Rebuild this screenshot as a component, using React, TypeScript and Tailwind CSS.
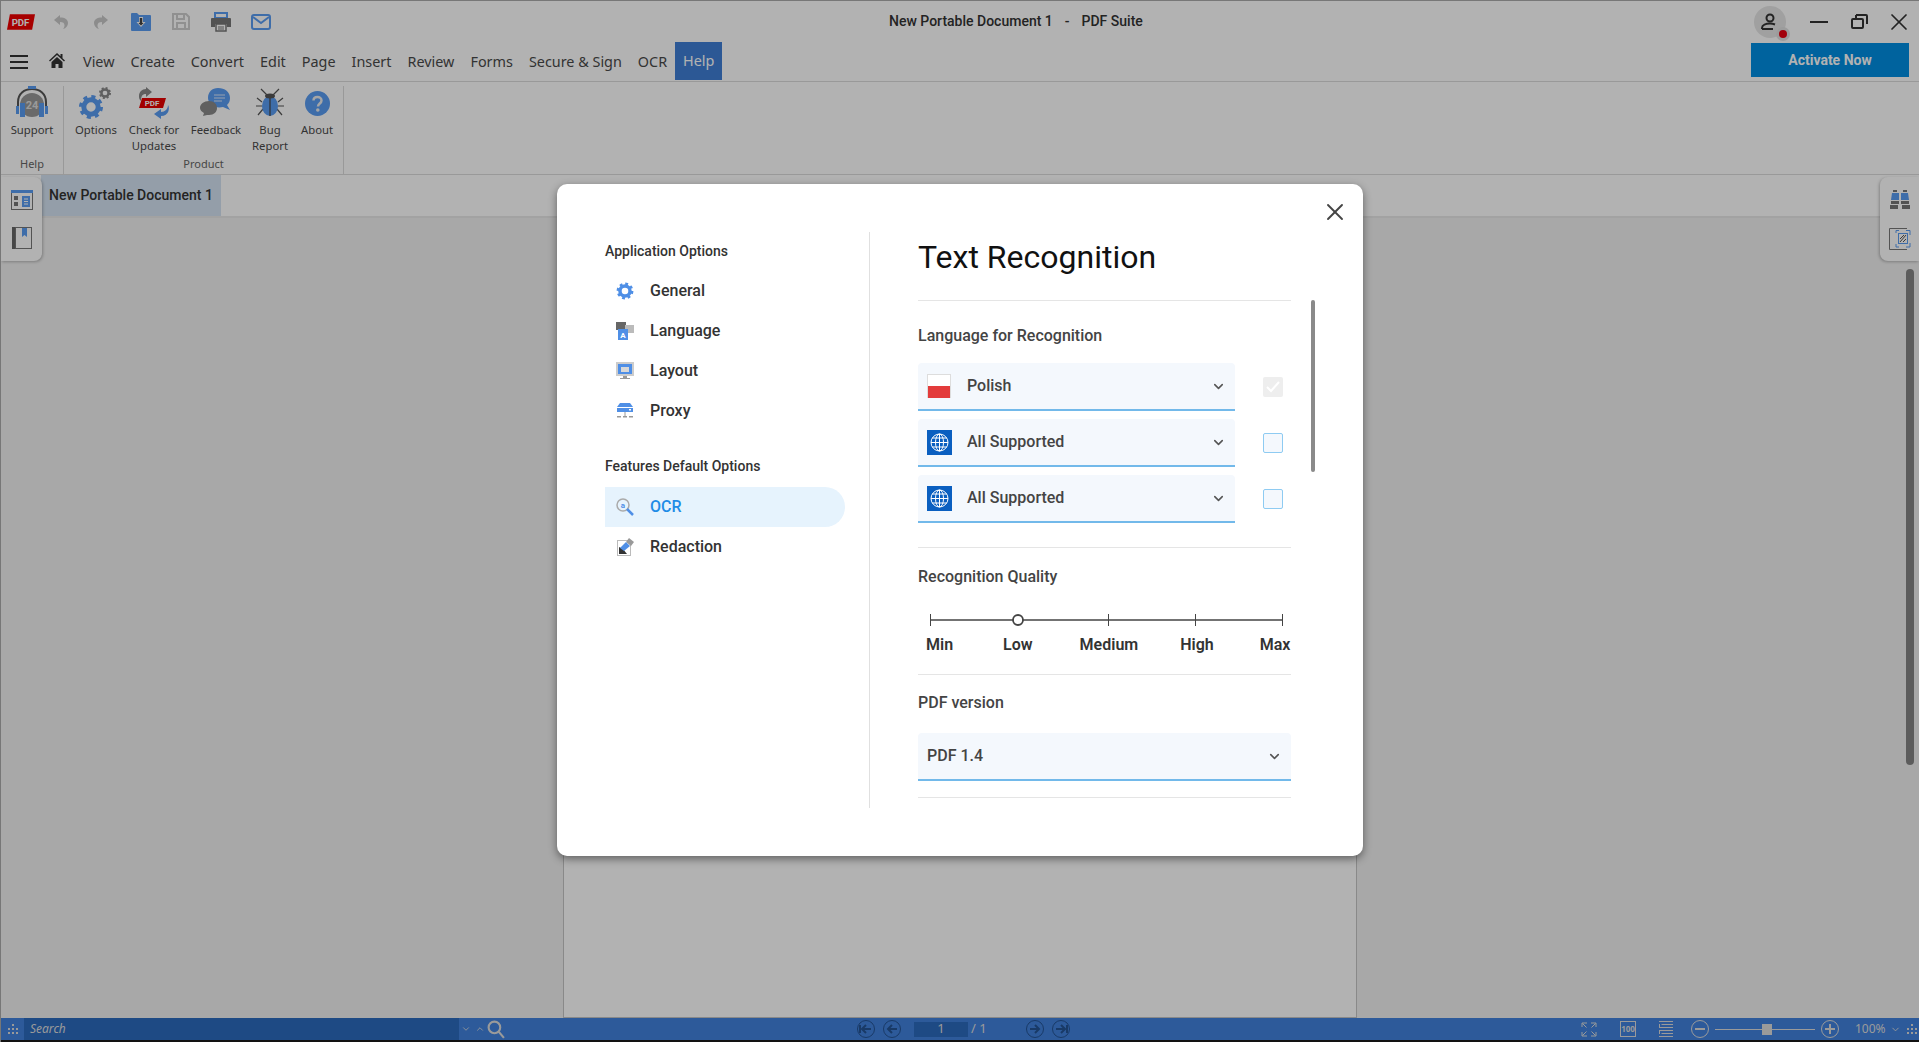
import { ChevronDown, X } from "lucide-react";

const BLUE = "#5a9cf2";

function Gear({ cx, cy, r, color }: { cx: number; cy: number; r: number; color: string }) {
  const teeth = (2 * Math.PI * r) / 16;
  return (
    <g fill="none" stroke={color}>
      <circle cx={cx} cy={cy} r={r} strokeWidth={r * 0.4} strokeDasharray={`${teeth} ${teeth}`} />
      <circle cx={cx} cy={cy} r={r * 0.72} strokeWidth={r * 0.5} />
    </g>
  );
}

function PdfLogo() {
  return (
    <svg width="30" height="18" viewBox="0 0 30 18">
      <path d="M3 1H29L26 17H0Z" fill="#f00000" />
      <text x="14" y="13" fontSize="10" fontWeight="700" fontFamily="Roboto" fill="#fff" textAnchor="middle">PDF</text>
    </svg>
  );
}

function UndoIcon({ flip }: { flip?: boolean }) {
  return (
    <svg width="16" height="16" viewBox="0 0 16 16" className={flip ? "-scale-x-100" : ""}>
      <path d="M7 1L1 6l6 5V8c3 0 4.500 1 4.500 3.500 0 1.500-.7 2.500-1.500 3.500 3-.8 5-3 5-6 0-3.500-3-5.500-8-5.500Z" fill="#c9c9c9" />
    </svg>
  );
}

function FolderIcon() {
  return (
    <svg width="20" height="19" viewBox="0 0 20 19">
      <path d="M0 2q0-1 1-1h5l2 2h11q1 0 1 1v14q0 1-1 1H1q-1 0-1-1Z" fill={BLUE} />
      <path d="M8 5h4v5h2.500L10 15 5.500 10H8Z" fill="#fff" />
      <path d="M8.800 6h2.400v5h1.400L10 13.500 7.400 11h1.400Z" fill="#444" />
    </svg>
  );
}

function SaveIcon() {
  return (
    <svg width="18" height="17" viewBox="0 0 18 17" fill="none" stroke="#cfcfcf" strokeWidth="2">
      <path d="M1 1h13l3 3v12H1Z" />
      <path d="M5 1v5h7V1M5 16v-6h8v6" />
    </svg>
  );
}

function PrintIcon() {
  return (
    <svg width="22" height="20" viewBox="0 0 22 20">
      <path d="M5 1h12v5H5Z" fill="#fff" stroke={BLUE} strokeWidth="2" />
      <path d="M1 7q0-1 1-1h18q1 0 1 1v8h-4v-3H5v3H1Z" fill="#777" />
      <path d="M6 12h10v7H6Z" fill="#fff" stroke="#777" strokeWidth="1.500" />
      <path d="M8 15h6M8 17h6" stroke="#777" />
    </svg>
  );
}

function MailIcon() {
  return (
    <svg width="20" height="16" viewBox="0 0 20 16" fill="none" stroke={BLUE} strokeWidth="2">
      <rect x="1" y="1" width="18" height="14" rx="2" />
      <path d="M2 3l8 6 8-6" />
    </svg>
  );
}

function HomeIcon() {
  return (
    <svg width="16" height="15" viewBox="0 0 16 15" fill="#333">
      <path d="M8 0L0 7.500l1 1L8 2l7 6.500 1-1-2.500-2.300V1H11.500v2.300Z" />
      <path d="M2.500 9L8 4l5.500 5v6H9.500v-4h-3v4h-4Z" />
    </svg>
  );
}

function SupportIcon() {
  return (
    <svg width="34" height="34" viewBox="0 0 34 34">
      <circle cx="17" cy="19" r="12" fill="#999" />
      <path d="M3 22V16C3 8 9 3 17 3s14 5 14 13v6" fill="none" stroke="#555" strokeWidth="2" />
      <rect x="13" y="0" width="8" height="3" fill={BLUE} />
      <rect x="5" y="17" width="5" height="14" fill={BLUE} />
      <rect x="24" y="17" width="5" height="14" fill={BLUE} />
      <rect x="1" y="20" width="3" height="8" fill={BLUE} />
      <rect x="30" y="20" width="3" height="8" fill={BLUE} />
      <text x="17" y="23" fontSize="11" fontWeight="700" fontFamily="Roboto" fill="#ddd" textAnchor="middle">24</text>
    </svg>
  );
}

function OptionsIcon() {
  return (
    <svg width="34" height="34" viewBox="0 0 34 34">
      <Gear cx={12} cy={21} r={10} color={BLUE} />
      <Gear cx={26} cy={7} r={5} color="#8a8a8a" />
    </svg>
  );
}

function UpdatesIcon() {
  return (
    <svg width="32" height="32" viewBox="0 0 32 32">
      <path d="M1 9c0-4 3-7 7-7V0l6 5-6 5V7C5 7 3 8 3 14 1 12 1 11 1 9Z" fill="#888" />
      <path d="M4 11h24l-3 10H1Z" fill="#e80000" />
      <text x="14" y="19" fontSize="8" fontWeight="700" fontFamily="Roboto" fill="#fff" textAnchor="middle">PDF</text>
      <path d="M30 18c2 3 1 11-7 11v3l-7-5 7-5v3c4 0 7-3 7-7Z" fill={BLUE} />
    </svg>
  );
}

function FeedbackIcon() {
  return (
    <svg width="32" height="30" viewBox="0 0 32 30">
      <path d="M18 0c7 0 12 4 12 10 0 3-1 5-3 7l3 5-7-3c-8 2-15-3-15-9C8 4 12 0 18 0Z" fill={BLUE} />
      <path d="M14 7h11M14 10h11M14 13h8" stroke="#dbe8fb" strokeWidth="1" />
      <path d="M9 13c5 0 8 3 8 7s-3 7-8 7l-2 0-4 1 1-3c-2-1-4-3-4-5 0-4 4-7 9-7Z" fill="#8a8a8a" />
    </svg>
  );
}

function BugIcon() {
  return (
    <svg width="28" height="30" viewBox="0 0 28 30" fill="none" stroke="#555" strokeWidth="1.200">
      <path d="M5 1l6 6M23 1l-6 6M1 10l5 4M27 10l-5 4M0 18h6M28 18h-6M2 27l5-6M26 27l-5-6" />
      <ellipse cx="14" cy="18" rx="8" ry="10" fill={BLUE} stroke="none" />
      <path d="M14 8v20" stroke="#444" />
      <ellipse cx="14" cy="8" rx="5" ry="2.500" fill="#555" stroke="none" />
    </svg>
  );
}

function AboutIcon() {
  return (
    <svg width="25" height="25" viewBox="0 0 25 25">
      <circle cx="12.500" cy="12.500" r="12.500" fill={BLUE} />
      <path d="M8.500 9.500c0-2.500 2-3.500 4-3.500s4 1.200 4 3.500c0 3-3.500 3-3.500 6" fill="none" stroke="#eee" strokeWidth="2.500" />
      <circle cx="12.800" cy="19" r="1.800" fill="#eee" />
    </svg>
  );
}

function PanelIcon() {
  return (
    <svg width="22" height="20" viewBox="0 0 22 20">
      <rect x="0.500" y="0.500" width="21" height="19" fill="#fff" stroke="#777" />
      <rect x="0" y="0" width="22" height="3" fill={BLUE} />
      <path d="M3 6h4v4H3ZM3 12h4v4H3Z" fill="#777" />
      <rect x="11" y="6" width="8" height="11" fill={BLUE} />
      <path d="M13 9h4M13 11.500h4M13 14h4" stroke="#fff" />
    </svg>
  );
}

function BookmarkIcon() {
  return (
    <svg width="20" height="22" viewBox="0 0 20 22">
      <rect x="0" y="0" width="3" height="22" fill="#666" />
      <rect x="3.500" y="0.500" width="16" height="21" fill="#fff" stroke="#777" />
      <path d="M10 1h5v9l-2.500-2L10 10Z" fill={BLUE} />
    </svg>
  );
}

function BinocularsIcon() {
  return (
    <svg width="20" height="19" viewBox="0 0 20 19">
      <path d="M3 0h4v2H3ZM13 0h4v2h-4Z" fill="#777" />
      <path d="M2 3h7v7H1ZM11 3h7l1 7h-8Z" fill={BLUE} />
      <rect x="9" y="5" width="2" height="5" fill="#fff" />
      <path d="M1 11h8v3H1ZM11 11h8v3h-8ZM0 15h8v4H0ZM12 15h8v4h-8Z" fill="#777" />
    </svg>
  );
}

function SnapIcon() {
  return (
    <svg width="22" height="22" viewBox="0 0 22 22" fill="none">
      <path d="M18 .5H.5v21H18" stroke="#777" />
      <path d="M7 5V2.500h3M17 2.500h4V7M21 15v4h-4M10 19H7v-3" stroke={BLUE} />
      <rect x="9.500" y="5.500" width="9" height="10" stroke={BLUE} />
      <path d="M11 14l6-7M11 11l4-4M14 14l3-3" stroke="#555" />
    </svg>
  );
}

function Grip() {
  return (
    <svg width="10" height="10" viewBox="0 0 10 10" fill="#ddd">
      <path d="M4 0h2v2H4ZM0 4h2v2H0ZM4 4h2v2H4ZM8 4h2v2H8ZM0 8h2v2H0ZM4 8h2v2H4ZM8 8h2v2H8Z" />
    </svg>
  );
}

function NavIcon({ dir, end }: { dir: "left" | "right"; end?: boolean }) {
  return (
    <svg width="18" height="18" viewBox="0 0 18 18" fill="none" stroke="#245394" className={dir === "right" ? "-scale-x-100" : ""}>
      <circle cx="9" cy="9" r="8.500" />
      <path d="M14 9H5.500M9 5L5 9l4 4" strokeWidth="2" />
      {end && <path d="M3 5v8" strokeWidth="2" />}
    </svg>
  );
}

function FitIcon() {
  return (
    <svg width="16" height="15" viewBox="0 0 16 15" fill="none" stroke="#ddd">
      <path d="M1 5V1h5M10 1h5v4M15 10v4h-5M6 14H1v-4M1.500 1.500l4 4M14.500 1.500l-4 4M14.500 13.500l-4-4M1.500 13.500l4-4" />
    </svg>
  );
}

function PageFlowIcon() {
  return (
    <svg width="14" height="16" viewBox="0 0 14 16" fill="none" stroke="#ddd">
      <path d="M0 .5h14M2.500 3.500H14M0 6.500h14M0 9.500h14M2.500 12.500H14M0 15.500h14" />
      <path d="M.5 3v4M.5 9v4" />
    </svg>
  );
}

function ZoomBtn({ plus }: { plus?: boolean }) {
  return (
    <svg width="18" height="18" viewBox="0 0 18 18" fill="none" stroke="#ddd">
      <circle cx="9" cy="9" r="8.500" />
      <path d="M4 9h10" strokeWidth="2" />
      {plus && <path d="M9 4v10" strokeWidth="2" />}
    </svg>
  );
}

function SearchIcon() {
  return (
    <svg width="18" height="19" viewBox="0 0 17 18" fill="none" stroke="#ddd" strokeWidth="2">
      <circle cx="7" cy="7" r="5.500" />
      <path d="M11 11l5 6" />
    </svg>
  );
}

function Globe() {
  return (
    <div className="flex h-[25px] w-[25px] items-center justify-center bg-[#0a5fc0]">
      <svg width="19" height="19" viewBox="0 0 19 19" fill="none" stroke="#fff" strokeWidth="1">
        <circle cx="9.500" cy="9.500" r="8.500" />
        <ellipse cx="9.500" cy="9.500" rx="4" ry="8.500" />
        <path d="M9.500 1v17M1 9.500h17M2.300 5h14.400M2.300 14h14.400" />
      </svg>
    </div>
  );
}

function Flag() {
  return (
    <div className="flex h-[24px] w-[24px] flex-col border border-b-0 border-[#ddd]">
      <div className="h-[11px] bg-white" />
      <div className="flex-1 bg-[#e33b3b]" />
    </div>
  );
}

function NavGeneral() {
  return (
    <svg width="18" height="18" viewBox="0 0 18 18">
      <Gear cx={9} cy={9} r={7} color="#4f8fe6" />
    </svg>
  );
}

function NavLanguage() {
  return (
    <svg width="18" height="18" viewBox="0 0 18 18">
      <rect x="0" y="0" width="10" height="8" fill="#666" />
      <rect x="9" y="3" width="9" height="8" fill="#bbb" />
      <rect x="2" y="7" width="10" height="11" fill="#4f8fe6" />
      <text x="7" y="16" fontSize="8" fontWeight="700" fontFamily="Roboto" fill="#fff" textAnchor="middle">A</text>
    </svg>
  );
}

function NavLayout() {
  return (
    <svg width="18" height="18" viewBox="0 0 18 18">
      <rect x="0" y="0" width="18" height="14" fill="#ccc" />
      <rect x="2" y="2" width="14" height="10" fill="#4f8fe6" />
      <rect x="5" y="5" width="8" height="5" fill="#d8d8d8" />
      <path d="M7 14h4v2h3v1H4v-1h3Z" fill="#999" />
    </svg>
  );
}

function NavProxy() {
  return (
    <svg width="18" height="16" viewBox="0 0 18 16">
      <path d="M4 0h10l3 4H1ZM1 5h16v4H1Z" fill="#4f8fe6" />
      <rect x="13" y="6" width="2" height="1.500" fill="#fff" />
      <path d="M8.500 9h1v4h-1ZM1 13h4v1.500H1ZM7 13h4v1.500H7ZM13 13h4v1.500h-4Z" fill="#999" />
    </svg>
  );
}

function NavOcr() {
  return (
    <svg width="18" height="18" viewBox="0 0 18 18" fill="none">
      <circle cx="7" cy="7" r="6" stroke="#aaa" strokeWidth="1.500" />
      <text x="7" y="10" fontSize="8" fontWeight="700" fontFamily="Roboto" fill="#4f8fe6" textAnchor="middle">a</text>
      <path d="M11 11l6 6" stroke="#4f8fe6" strokeWidth="2.500" />
    </svg>
  );
}

function NavRedaction() {
  return (
    <svg width="17" height="18" viewBox="0 0 17 18">
      <rect x="0.500" y="2.500" width="13" height="15" fill="#fff" stroke="#bbb" />
      <path d="M2 16V9l4 2 4 5Z" fill="#333" />
      <path d="M12 0l5 4-3 4-5-4Z" fill="#999" />
      <path d="M3 10l6-6 4 4-6 5Z" fill="#4f8fe6" />
    </svg>
  );
}

const menus = ["View", "Create", "Convert", "Edit", "Page", "Insert", "Review", "Forms", "Secure & Sign", "OCR"];

const ribbon = [
  { label: "Options", icon: <OptionsIcon />, w: "w-[52px]" },
  { label: "Check for Updates", icon: <UpdatesIcon />, w: "w-[64px]" },
  { label: "Feedback", icon: <FeedbackIcon />, w: "w-[60px]" },
  { label: "Bug Report", icon: <BugIcon />, w: "w-[48px]" },
  { label: "About", icon: <AboutIcon />, w: "w-[46px]" },
];

function RibbonBtn({ label, icon, w }: { label: string; icon: React.ReactNode; w: string }) {
  return (
    <div className={`flex flex-col items-center ${w}`}>
      <div className="flex h-[34px] items-center justify-center">{icon}</div>
      <div className="mt-[2px] text-center text-[11.300px] leading-[16px] text-[#4a4a4a]">{label}</div>
    </div>
  );
}

function NavRow({ icon, label, active }: { icon: React.ReactNode; label: string; active?: boolean }) {
  return (
    <div className={`flex h-[40px] w-[240px] items-center rounded-r-full ${active ? "bg-[#e6f3fd] text-[#1f8ce6]" : "text-[#333]"}`}>
      <div className="flex w-[45px] justify-center pr-[5px]">{icon}</div>
      <span className="text-[16px] font-medium">{label}</span>
    </div>
  );
}

function LangRow({ icon, label, checked }: { icon: React.ReactNode; label: string; checked?: boolean }) {
  return (
    <div className="flex items-center">
      <div className="flex h-[48px] w-[317px] items-center rounded-t-[4px] border-b-2 border-[#72b9ea] bg-[#f4f8fd] pr-[9px] pl-[9px]">
        <div className="w-[40px]">{icon}</div>
        <span className="flex-1 text-[16px] font-medium text-[#444]">{label}</span>
        <ChevronDown size={15} strokeWidth={2.5} className="text-[#555]" />
      </div>
      {checked ? (
        <div className="ml-[28px] flex h-[20px] w-[20px] items-center justify-center rounded-[2px] bg-[#eeeeee]">
          <svg width="14" height="12" viewBox="0 0 14 12" fill="none" stroke="#fff" strokeWidth="2">
            <path d="M1 6l4 4 8-9" />
          </svg>
        </div>
      ) : (
        <div className="ml-[28px] h-[20px] w-[20px] rounded-[2px] border border-[#8ecbf2] bg-[#f4f8fd]" />
      )}
    </div>
  );
}

export default function App() {
  return (
    <div className="relative flex h-[1042px] w-[1919px] flex-col overflow-hidden border-t border-l border-[#777] bg-white font-['Noto_Sans',sans-serif] text-[#333]">
      {/* title bar */}
      <div className="flex h-[41px] items-center">
        <div className="ml-[6px] flex w-[29px] items-center">
          <PdfLogo />
        </div>
        <div className="ml-[5px] flex items-center">
          <div className="flex w-[40px] justify-center"><UndoIcon /></div>
          <div className="flex w-[40px] justify-center"><UndoIcon flip /></div>
          <div className="flex w-[40px] justify-center"><FolderIcon /></div>
          <div className="flex w-[40px] justify-center"><SaveIcon /></div>
          <div className="flex w-[40px] justify-center"><PrintIcon /></div>
          <div className="flex w-[40px] justify-center"><MailIcon /></div>
        </div>
        <div className="ml-[608px] flex gap-[12px] font-['Roboto',sans-serif] text-[14px] font-medium text-[#333]">
          <span>New Portable Document 1</span>
          <span>-</span>
          <span>PDF Suite</span>
        </div>
        <div className="relative ml-auto flex h-[32px] w-[32px] items-center justify-center rounded-full bg-[#e6e6e6]">
          <svg width="18" height="17" viewBox="0 0 18 17" fill="none" stroke="#333" strokeWidth="2">
            <circle cx="9" cy="5" r="3.500" />
            <path d="M1 16v-1c0-3 4-4.500 8-4.500 2 0 3.500.4 5 1M1 16h11" />
          </svg>
          <div className="absolute right-[-4px] bottom-[-3px] flex h-[14px] w-[14px] items-center justify-center rounded-full bg-[#e0e0e0]">
            <div className="h-[8px] w-[8px] rounded-full bg-[#e8000f]" />
          </div>
        </div>
        <div className="ml-[24px] h-[2px] w-[18px] bg-[#333]" />
        <svg className="ml-[23px]" width="17" height="15" viewBox="0 0 17 15" fill="none" stroke="#333" strokeWidth="2">
          <rect x="1" y="5" width="11" height="9" rx="1" />
          <path d="M5 1h10q1 0 1 1v8" />
          <path d="M5 1v3" />
        </svg>
        <X className="mr-[6px] ml-[17px] text-[#333]" size={28} strokeWidth={1.5} />
      </div>

      {/* menu row */}
      <div className="flex h-[40px] border-b border-[#dcdcdc]">
        <div className="ml-[9px] flex items-center">
          <div className="flex flex-col gap-[4px]">
            <div className="h-[2px] w-[18px] bg-[#333]" />
            <div className="h-[2px] w-[18px] bg-[#333]" />
            <div className="h-[2px] w-[18px] bg-[#333]" />
          </div>
        </div>
        <div className="ml-[21px] flex items-center pb-[3px]">
          <HomeIcon />
        </div>
        <div className="ml-[18px] flex items-center gap-[16px] text-[14.400px] text-[#4a4a4a]">
          {menus.map((m) => (
            <span key={m}>{m}</span>
          ))}
        </div>
        <div className="ml-[8px] flex h-[38px] w-[47px] items-center justify-center self-start bg-[#3f7fd6] text-[14.400px] text-white">
          Help
        </div>
        <div className="mt-px mr-[10px] ml-auto flex h-[34px] w-[158px] items-center justify-center bg-[#008ee3] font-['Roboto',sans-serif] text-[14px] font-bold text-white">
          Activate Now
        </div>
      </div>

      {/* ribbon */}
      <div className="flex h-[93px] border-b border-[#dcdcdc] pt-[4px]">
        <div className="flex w-[63px] flex-col items-center border-r border-[#dcdcdc]">
          <RibbonBtn label="Support" icon={<SupportIcon />} w="w-[50px]" />
          <div className="mt-auto pb-[2px] text-[11px] text-[#666]">Help</div>
        </div>
        <div className="flex w-[280px] flex-col border-r border-[#dcdcdc]">
          <div className="flex pl-[6px]">
            {ribbon.map((r) => (
              <RibbonBtn key={r.label} {...r} />
            ))}
          </div>
          <div className="mt-auto pb-[2px] text-center text-[11px] text-[#666]">Product</div>
        </div>
      </div>

      {/* tab row */}
      <div className="flex h-[43px] border-b-2 border-[#e8e8e8] pl-[40px]">
        <div className="flex h-[41px] w-[180px] items-center justify-center bg-[#d5e3f2] font-['Roboto',sans-serif] text-[14px] font-medium text-[#333]">
          New Portable Document 1
        </div>
      </div>

      {/* doc area */}
      <div className="flex flex-1 justify-center overflow-hidden bg-[#f1f1f1] pt-[16px]">
        <div className="w-[794px] border border-[#c4c4c4] bg-white" />
      </div>
      <div className="absolute top-[268px] right-[5px] h-[496px] w-[8px] rounded-full bg-[#858585]" />

      {/* status bar */}
      <div className="flex h-[22px] items-center bg-[#4182dd] text-[#ddd]">
        <div className="flex w-[23px] justify-center">
          <Grip />
        </div>
        <div className="flex h-full w-[435px] items-center bg-[#2c6abe] pl-[6px] text-[12px] italic">Search</div>
        <ChevronDown className="ml-[2px]" size={10} />
        <ChevronDown className="ml-[4px] rotate-180" size={10} />
        <div className="ml-[2px]">
          <SearchIcon />
        </div>
        <div className="ml-[352px]">
          <NavIcon dir="left" end />
        </div>
        <div className="ml-[8px]">
          <NavIcon dir="left" />
        </div>
        <div className="ml-[13px] flex h-[15px] w-[54px] items-center justify-center bg-[#2c6abe] text-[13px]">1</div>
        <div className="ml-[3px] w-[55px] text-[13px]">/ 1</div>
        <div>
          <NavIcon dir="right" />
        </div>
        <div className="ml-[8px]">
          <NavIcon dir="right" end />
        </div>
        <div className="ml-[511px]">
          <FitIcon />
        </div>
        <div className="ml-[23px] flex h-[16px] w-[16px] items-center justify-center border border-[#ddd] text-[8px] font-bold">100</div>
        <div className="ml-[23px]">
          <PageFlowIcon />
        </div>
        <div className="ml-[18px]">
          <ZoomBtn />
        </div>
        <div className="relative ml-[6px] flex h-[10px] w-[100px] items-center">
          <div className="h-px w-full bg-[#ddd]" />
          <div className="absolute left-[47px] h-[11px] w-[10px] bg-[#ddd]" />
        </div>
        <div className="ml-[6px]">
          <ZoomBtn plus />
        </div>
        <span className="ml-[16px] text-[12px]">100%</span>
        <ChevronDown className="ml-[4px]" size={11} />
        <div className="ml-[6px]">
          <Grip />
        </div>
      </div>
      <div className="h-[2px] bg-[#1a1a1a]" />

      {/* floating side panels */}
      <div className="absolute top-[176px] left-0 flex h-[84px] w-[41px] flex-col items-center gap-[17px] rounded-r-[8px] bg-white pt-[13px] shadow-[1px_1px_3px_rgba(0,0,0,0.25)]">
        <PanelIcon />
        <BookmarkIcon />
      </div>
      <div className="absolute top-[176px] right-0 flex h-[84px] w-[39px] flex-col items-center gap-[19px] rounded-l-[8px] bg-white pt-[13px] shadow-[-1px_1px_3px_rgba(0,0,0,0.25)]">
        <BinocularsIcon />
        <SnapIcon />
      </div>

      {/* dim */}
      <div className="absolute inset-0 bg-black/30" />

      {/* modal */}
      <div className="absolute top-[183px] left-[556px] flex h-[672px] w-[806px] rounded-[10px] bg-white pt-[48px] pl-[48px] font-['Roboto',sans-serif] shadow-[0_3px_8px_rgba(0,0,0,0.45)]">
        <X className="absolute top-[14px] right-[14px] text-[#444]" size={28} strokeWidth={1.6} />
        <div className="flex h-[576px] w-[265px] flex-col border-r border-[#e0e0e0]">
          <div className="flex h-[39px] items-center text-[14px] font-medium text-[#333]">Application Options</div>
          <NavRow icon={<NavGeneral />} label="General" />
          <NavRow icon={<NavLanguage />} label="Language" />
          <NavRow icon={<NavLayout />} label="Layout" />
          <NavRow icon={<NavProxy />} label="Proxy" />
          <div className="mt-[26px] flex h-[19px] items-center text-[14px] font-medium text-[#333]">Features Default Options</div>
          <div className="mt-[11px]" />
          <NavRow icon={<NavOcr />} label="OCR" active />
          <NavRow icon={<NavRedaction />} label="Redaction" />
        </div>
        <div className="ml-[48px] flex w-[373px] flex-col">
          <div className="flex h-[69px] items-center border-b border-[#e5e5e5] pb-[18px] text-[32px] leading-none text-[#111]">Text Recognition</div>
          <div className="flex h-[62px] items-center pt-[8px] text-[16px] font-medium text-[#444]">Language for Recognition</div>
          <div className="flex flex-col gap-[8px]">
            <LangRow icon={<Flag />} label="Polish" checked />
            <LangRow icon={<Globe />} label="All Supported" />
            <LangRow icon={<Globe />} label="All Supported" />
          </div>
          <div className="mt-[24px] border-t border-[#e5e5e5]" />
          <div className="flex h-[65px] items-center pb-[8px] text-[16px] font-medium text-[#444]">Recognition Quality</div>
          <svg className="ml-[12px]" width="353" height="14" viewBox="0 0 353 14" fill="none" stroke="#444">
            <path d="M0 7h352" strokeWidth="1.500" />
            <path d="M.5 1v12M178.500 1v12M265.500 1v12M352.500 1v12" />
            <circle cx="88" cy="7" r="5" fill="#fff" strokeWidth="1.800" />
          </svg>
          <div className="mt-[8px] flex h-[20px] items-center text-[16px] font-semibold whitespace-nowrap text-[#333]">
            <span className="ml-[8px]">Min</span>
            <span className="ml-[50px]">Low</span>
            <span className="ml-[47px]">Medium</span>
            <span className="ml-[42px]">High</span>
            <span className="ml-[46px]">Max</span>
          </div>
          <div className="mt-[19px] border-t border-[#e5e5e5]" />
          <div className="flex h-[58px] items-center pb-[3px] text-[16px] font-medium text-[#444]">PDF version</div>
          <div className="flex h-[48px] items-center justify-between rounded-t-[4px] border-b-2 border-[#72b9ea] bg-[#f4f8fd] px-[9px] text-[16px] font-medium text-[#444]">
            <span>PDF 1.4</span>
            <ChevronDown size={15} strokeWidth={2.5} className="text-[#555]" />
          </div>
          <div className="mt-[16px] border-t border-[#e5e5e5]" />
        </div>
        <div className="mt-[68px] ml-[20px] h-[172px] w-[4px] rounded-full bg-[#8a8a8a]" />
      </div>
    </div>
  );
}
